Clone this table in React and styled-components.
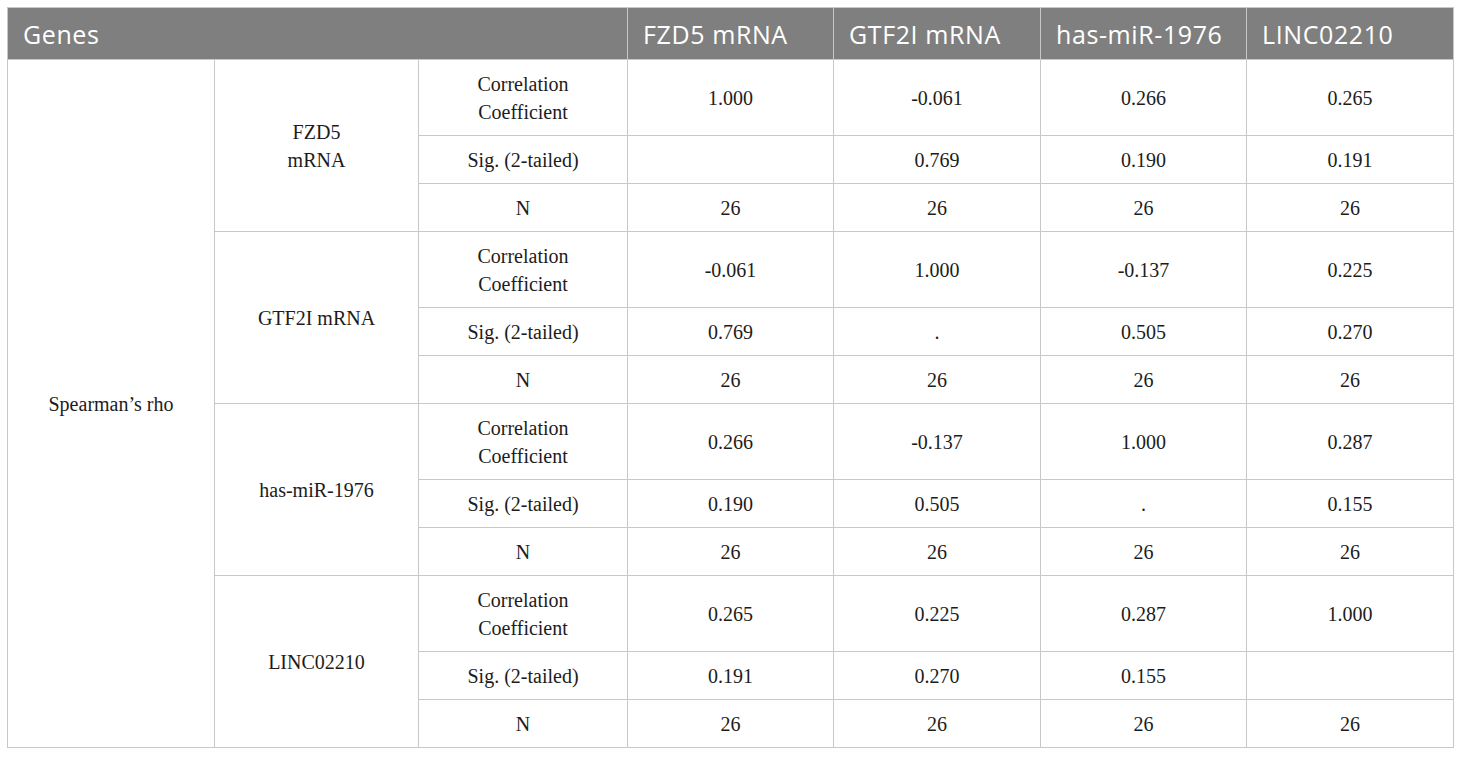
import React from 'react';
import styled, { createGlobalStyle } from 'styled-components';

const GlobalStyle = createGlobalStyle`
  body {
    margin: 0;
    background: #ffffff;
  }
`

const Page = styled.div`
  padding: 7px;
`

const Table = styled.table`
  table-layout: fixed;
  width: 1447px;
  border-collapse: collapse;
  font-family: "Liberation Serif", "Times New Roman", serif;
  font-size: 20px;
  color: #1c1c1c;
`

const HeadRow = styled.tr`
  height: 52px;
  background: #7f7f7f;
`

const HeadCell = styled.th`
  padding: 0 15px;
  text-align: left;
  font-family: "Open Sans", "Noto Sans", sans-serif;
  font-weight: 400;
  font-size: 25px;
  letter-spacing: 0.6px;
  color: #ffffff;
  border: 1px solid #c8c8c8;
  border-left-color: ${p => (p.$first ? '#c8c8c8' : '#a8a8a8')};
  white-space: nowrap;
`

const Row = styled.tr`
  height: ${p => p.$height}px;
`

const Cell = styled.td`
  padding: 0 8px;
  text-align: center;
  vertical-align: middle;
  line-height: 28px;
  border: 1px solid #c8c8c8;
`

const columns = ['FZD5 mRNA', 'GTF2I mRNA', 'has-miR-1976', 'LINC02210'];

const groups = [
  {
    name: <>FZD5<br />mRNA</>,
    cc: ['1.000', '-0.061', '0.266', '0.265'],
    sig: ['', '0.769', '0.190', '0.191'],
  },
  {
    name: 'GTF2I mRNA',
    cc: ['-0.061', '1.000', '-0.137', '0.225'],
    sig: ['0.769', '.', '0.505', '0.270'],
  },
  {
    name: 'has-miR-1976',
    cc: ['0.266', '-0.137', '1.000', '0.287'],
    sig: ['0.190', '0.505', '.', '0.155'],
  },
  {
    name: 'LINC02210',
    cc: ['0.265', '0.225', '0.287', '1.000'],
    sig: ['0.191', '0.270', '0.155', ''],
  },
];

const widths = [207, 204, 209, 206, 207, 206, 207];

const App = () => {
  return (
    <Page>
      <GlobalStyle />
      <Table>
        <colgroup>
          {widths.map((w, i) => <col key={i} style={{ width: w }} />)}
        </colgroup>
        <thead>
          <HeadRow>
            <HeadCell colSpan={3} $first>Genes</HeadCell>
            {columns.map(c => <HeadCell key={c}>{c}</HeadCell>)}
          </HeadRow>
        </thead>
        <tbody>
          {groups.map((g, gi) => (
            <React.Fragment key={gi}>
              <Row $height={76}>
                {gi === 0 && <Cell rowSpan={12}>Spearman’s rho</Cell>}
                <Cell rowSpan={3}>{g.name}</Cell>
                <Cell>Correlation<br />Coefficient</Cell>
                {g.cc.map((v, i) => <Cell key={i}>{v}</Cell>)}
              </Row>
              <Row $height={48}>
                <Cell>Sig. (2-tailed)</Cell>
                {g.sig.map((v, i) => <Cell key={i}>{v}</Cell>)}
              </Row>
              <Row $height={48}>
                <Cell>N</Cell>
                {g.cc.map((v, i) => <Cell key={i}>26</Cell>)}
              </Row>
            </React.Fragment>
          ))}
        </tbody>
      </Table>
    </Page>
  );
}

export default App;
